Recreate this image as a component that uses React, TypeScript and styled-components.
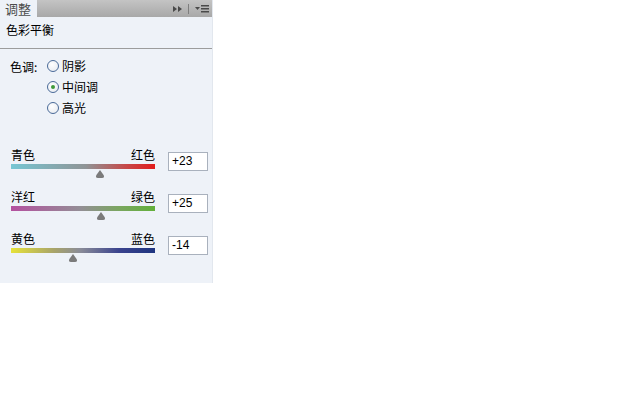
import React from 'react';
import styled, { createGlobalStyle } from 'styled-components';

const GlobalStyle = createGlobalStyle`
    body {
        margin: 0;
        background: #ffffff;
        font-family: 'Noto Sans CJK SC', 'Liberation Sans', sans-serif;
    }
`;

interface Balance {
    left: string;
    right: string;
    value: number;
    gradient: string;
}

const balances: Balance[] = [
    { left: '青色', right: '红色', value: 23, gradient: 'linear-gradient(to right, #76c6d3, #8f9496 52%, #c64848 80%, #e21c1c)' },
    { left: '洋红', right: '绿色', value: 25, gradient: 'linear-gradient(to right, #b4509f, #938e96 48%, #7aa660 75%, #62b03a)' },
    { left: '黄色', right: '蓝色', value: -14, gradient: 'linear-gradient(to right, #e6e23a, #a8a46a 30%, #8a8c98 48%, #3a438e 75%, #1f3580)' },
];

const tones = [
    { label: '阴影', checked: false },
    { label: '中间调', checked: true },
    { label: '高光', checked: false },
];

const TRACK_WIDTH = 144;

const Panel = styled.div`
    width: 213px;
    height: 283px;
    background: #eef2f8;
    box-sizing: border-box;
    border-right: 1px solid #e2e7ee;
    font-size: 12px;
    color: #000;
`;

const TabBar = styled.div`
    display: flex;
    height: 17px;
    background: linear-gradient(#c4c4c4, #a8a8a8);
`;

const Tab = styled.div`
    width: 37px;
    padding-left: 5px;
    box-sizing: border-box;
    background: #eef2f8;
    color: #4c4c4c;
    font-size: 13px;
    line-height: 17px;
`;

const TabTools = styled.div`
    margin-left: auto;
    display: flex;
    align-items: center;
    gap: 6px;
    padding-right: 3px;
`;

const ToolDivider = styled.div`
    width: 1px;
    height: 10px;
    background: #7e7e7e;
`;

const Title = styled.div`
    padding: 4px 0 0 6px;
    line-height: 18px;
`;

const Divider = styled.div`
    margin-top: 9px;
    height: 1px;
    background: #9c9c9c;
`;

const ToneRow = styled.div`
    display: flex;
    margin-top: 6px;
    padding-left: 10px;
`;

const ToneLabel = styled.div`
    width: 37px;
    line-height: 21px;
    padding-top: 1px;
`;

const RadioList = styled.div`
    display: flex;
    flex-direction: column;
`;

const RadioItem = styled.label`
    display: flex;
    align-items: center;
    height: 21px;
    gap: 3px;
`;

const RadioCircle = styled.span<{ $checked: boolean }>`
    position: relative;
    width: 12px;
    height: 12px;
    box-sizing: border-box;
    border: 1px solid #4a6a98;
    border-radius: 50%;
    background: radial-gradient(circle at 40% 35%, #ffffff, #e4e8ee);
    &::after {
        content: '';
        display: ${(p) => (p.$checked ? 'block' : 'none')};
        position: absolute;
        left: 3px;
        top: 3px;
        width: 4px;
        height: 4px;
        border-radius: 50%;
        background: #3f9a3a;
    }
`;

const Sliders = styled.div`
    margin-top: 29px;
    display: flex;
    flex-direction: column;
    gap: 11px;
`;

const SliderRow = styled.div`
    display: flex;
    padding-left: 11px;
`;

const SliderColumn = styled.div`
    width: ${TRACK_WIDTH}px;
`;

const SliderLabels = styled.div`
    display: flex;
    justify-content: space-between;
    line-height: 16px;
`;

const Track = styled.div<{ $gradient: string }>`
    position: relative;
    margin-top: 1px;
    height: 5px;
    background: ${(p) => p.$gradient};
`;

const ThumbSpace = styled.div`
    height: 9px;
`;

const Thumb = styled.svg`
    position: absolute;
    top: 6px;
    margin-left: -5px;
`;

const ValueBox = styled.div`
    margin: 5px 0 0 13px;
    width: 40px;
    height: 19px;
    box-sizing: border-box;
    border: 1px solid #a9b1bd;
    background: #fff;
    padding-left: 3px;
    font-family: 'Liberation Sans', sans-serif;
    font-size: 12px;
    line-height: 17px;
`;

const ForwardIcon = () => (
    <svg width="9" height="6" viewBox="0 0 9 6">
        <path d="M0 0 L4 3 L0 6 Z M5 0 L9 3 L5 6 Z" fill="#4a4a4a" />
    </svg>
);

const MenuIcon = () => (
    <svg width="14" height="8" viewBox="0 0 14 8">
        <path d="M0 2 L5 2 L2.5 5 Z" fill="#4a4a4a" />
        <rect x="6" y="0" width="8" height="1.5" fill="#4a4a4a" />
        <rect x="6" y="3" width="8" height="1.5" fill="#4a4a4a" />
        <rect x="6" y="6" width="8" height="1.5" fill="#4a4a4a" />
    </svg>
);

const BalanceSlider = ({ balance }: { balance: Balance }) => {
    const left = ((balance.value + 100) / 200) * TRACK_WIDTH;
    const text = balance.value > 0 ? `+${balance.value}` : `${balance.value}`;
    return (
        <SliderRow>
            <SliderColumn>
                <SliderLabels>
                    <span>{balance.left}</span>
                    <span>{balance.right}</span>
                </SliderLabels>
                <Track $gradient={balance.gradient}>
                    <Thumb width="10" height="8" viewBox="0 0 10 8" style={{ left }}>
                        <path d="M5 0 L8.6 5 Q10 8 7 8 L3 8 Q0 8 1.4 5 Z" fill="#7b7b7b" />
                    </Thumb>
                </Track>
                <ThumbSpace />
            </SliderColumn>
            <ValueBox>{text}</ValueBox>
        </SliderRow>
    );
};

export default function App() {
    return (
        <>
            <GlobalStyle />
            <Panel>
                <TabBar>
                    <Tab>调整</Tab>
                    <TabTools>
                        <ForwardIcon />
                        <ToolDivider />
                        <MenuIcon />
                    </TabTools>
                </TabBar>
                <Title>色彩平衡</Title>
                <Divider />
                <ToneRow>
                    <ToneLabel>色调:</ToneLabel>
                    <RadioList>
                        {tones.map((t) => (
                            <RadioItem key={t.label}>
                                <RadioCircle $checked={t.checked} />
                                {t.label}
                            </RadioItem>
                        ))}
                    </RadioList>
                </ToneRow>
                <Sliders>
                    {balances.map((b) => (
                        <BalanceSlider key={b.left} balance={b} />
                    ))}
                </Sliders>
            </Panel>
        </>
    );
}
